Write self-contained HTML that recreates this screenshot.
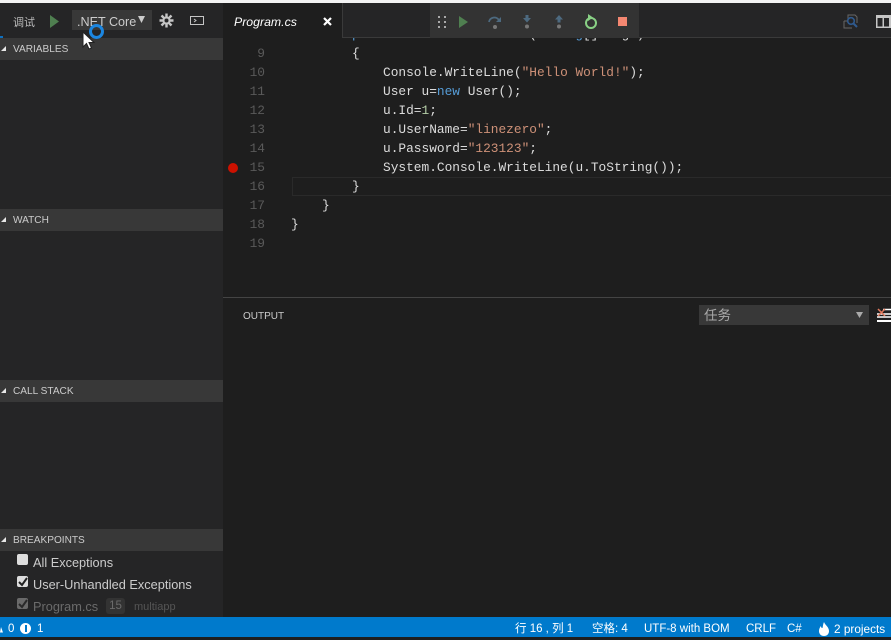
<!DOCTYPE html>
<html><head><meta charset="utf-8"><style>
html,body{margin:0;padding:0}
body{width:891px;height:637px;overflow:hidden;position:relative;background:#1e1e1e;font-family:"Liberation Sans","Noto Sans CJK SC",sans-serif;}
.a{position:absolute;white-space:pre}
.sec{position:absolute;left:0;width:223px;height:22px;background:#383838;color:#ccc;font-size:10.1px;line-height:23px;}
.sec span{position:absolute;left:13px}
.sec i{position:absolute;left:1px;top:8px;width:0;height:0;border-style:solid;border-width:0 0 5px 5px;border-color:transparent transparent #e8e8e8 transparent}
.ln{position:absolute;left:223px;width:42px;text-align:right;color:#5a5a5a;font:12.83px/19px "Liberation Mono",monospace}
.c{position:absolute;color:#dcdcdc;font:12.83px/19px "Liberation Mono",monospace;white-space:pre}
.s{color:#ce9178}.k{color:#569cd6}.n{color:#b5cea8}.b{color:#9cdcfe}
.st{position:absolute;top:618px;height:20px;line-height:22px;color:#fff;font-size:11.5px;white-space:pre}
.cb{position:absolute;left:17px;width:11px;height:11px;background:#ddd;border-radius:2px}
</style></head><body>
<div class="a" style="left:0;top:0;width:891px;height:3px;background:#f3f3f3"></div>
<div class="a" style="left:0;top:3px;width:223px;height:614px;background:#252526"></div>
<div class="a" style="left:223px;top:3px;width:668px;height:34px;background:#252526"></div>
<div class="a" style="left:223px;top:37px;width:668px;height:1px;background:#3a3a3a"></div>
<div class="a" style="left:223px;top:3px;width:119px;height:35px;background:#1e1e1e"></div>
<div class="a" style="left:342px;top:3px;width:1px;height:34px;background:#3a3a3a"></div>
<div class="a" style="left:0;top:36px;width:3px;height:2px;background:#0e70c0"></div>

<div class="a" style="left:13px;top:15px;font-size:11px;line-height:16px;color:#bbb">调试</div>
<svg class="a" style="left:50px;top:15px" width="9" height="13"><path d="M0 0L9 6.500L0 13Z" fill="#4f7f50"/></svg>
<div class="a" style="left:72px;top:10px;width:80px;height:20px;background:#383838"></div>
<div class="a" style="left:77px;top:14px;font-size:12.6px;line-height:16px;color:#ccc">.NET Core</div>
<svg class="a" style="left:138px;top:16px" width="8" height="7"><path d="M0 0H7L3.500 7Z" fill="#ccc"/></svg>
<svg class="a" style="left:159px;top:13px" width="15" height="15" viewBox="0 0 15 15"><g stroke="#c5c5c5" stroke-width="2.400"><path d="M7.500 0.500V14.500M0.500 7.500H14.500M2.500 2.500L12.500 12.500M12.500 2.500L2.500 12.500"/></g><circle cx="7.500" cy="7.500" r="4" fill="#c5c5c5"/><circle cx="7.500" cy="7.500" r="2" fill="#252526"/></svg>
<svg class="a" style="left:190px;top:16px" width="15" height="10"><rect x=".5" y=".5" width="13" height="8" fill="none" stroke="#c5c5c5"/><path d="M4 3L6 4.500L4 6" stroke="#c5c5c5" fill="none"/></svg>

<div class="sec" style="top:38px"><i></i><span>VARIABLES</span></div>
<div class="sec" style="top:209px"><i></i><span>WATCH</span></div>
<div class="sec" style="top:380px"><i></i><span>CALL STACK</span></div>
<div class="sec" style="top:529px"><i></i><span>BREAKPOINTS</span></div>

<div class="a" style="left:89px;top:24px;width:9px;height:9px;border:3.500px solid #1c86e0;border-radius:50%"></div>
<svg class="a" style="left:82px;top:31px" width="13" height="20"><path d="M1 1V16L4.500 12.500L7 18L9.500 17L7 11.500H12Z" fill="#fff" stroke="#222"/></svg>

<div class="cb" style="top:554px"></div>
<div class="a" style="left:33px;top:555px;font-size:12.75px;line-height:16px;color:#ccc">All Exceptions</div>
<div class="cb" style="top:576px"></div>
<svg class="a" style="left:18px;top:577px" width="10" height="10"><path d="M1 5L4 8L9 1" stroke="#222" stroke-width="2" fill="none"/></svg>
<div class="a" style="left:33px;top:577px;font-size:12.75px;line-height:16px;color:#ccc">User-Unhandled Exceptions</div>
<div class="cb" style="top:598px;background:#6a6a6a"></div>
<svg class="a" style="left:18px;top:599px" width="10" height="10"><path d="M1 5L4 8L9 1" stroke="#2a2a2a" stroke-width="2" fill="none"/></svg>
<div class="a" style="left:33px;top:599px;font-size:12.75px;line-height:16px;color:#6b6b6b">Program.cs</div>
<div class="a" style="left:106px;top:598px;width:19px;height:16px;border-radius:3px;background:#333;color:#6b6b6b;font-size:11.5px;line-height:17px;text-align:center">15</div>
<div class="a" style="left:134px;top:600px;font-size:11px;line-height:15px;color:#555">multiapp</div>

<div class="a" style="left:234px;top:14px;font-size:12.3px;line-height:16px;font-style:italic;color:#fff">Program.cs</div>
<svg class="a" style="left:323px;top:17px" width="9" height="9"><path d="M1 1L8 8M8 1L1 8" stroke="#fff" stroke-width="2.200"/></svg>

<div class="a" style="left:292px;top:177px;width:599px;height:17px;border:1px solid #2a2a2a;border-right:0"></div>

<div class="c" style="left:352px;top:25px;clip-path:inset(13px 0 0 0)"><span class="k">public static</span> <span class="k">void</span> Main(<span class="k">string</span>[] args)</div>
<div class="ln" style="top:44px">9</div><div class="c" style="left:352px;top:44px">{</div>
<div class="ln" style="top:63px">10</div><div class="c" style="left:383px;top:63px">Console.WriteLine(<span class="s">"Hello World!"</span>);</div>
<div class="ln" style="top:82px">11</div><div class="c" style="left:383px;top:82px">User u=<span class="k">new</span> User();</div>
<div class="ln" style="top:101px">12</div><div class="c" style="left:383px;top:101px">u.Id=<span class="n">1</span>;</div>
<div class="ln" style="top:120px">13</div><div class="c" style="left:383px;top:120px">u.UserName=<span class="s">"linezero"</span>;</div>
<div class="ln" style="top:139px">14</div><div class="c" style="left:383px;top:139px">u.Password=<span class="s">"123123"</span>;</div>
<div class="ln" style="top:158px">15</div><div class="c" style="left:383px;top:158px">System.Console.WriteLine(u.ToString());</div>
<div class="ln" style="top:177px">16</div><div class="c" style="left:352px;top:177px">}</div>
<div class="ln" style="top:196px">17</div><div class="c" style="left:322px;top:196px">}</div>
<div class="ln" style="top:215px">18</div><div class="c" style="left:291px;top:215px">}</div>
<div class="ln" style="top:234px">19</div>
<div class="a" style="left:228px;top:163px;width:10px;height:10px;border-radius:50%;background:#c10"></div>

<div class="a" style="left:430px;top:3px;width:209px;height:35px;background:#333"></div>
<svg class="a" style="left:438px;top:16px" width="9" height="12" fill="#aaa"><rect width="2" height="2"/><rect x="6" width="2" height="2"/><rect y="5" width="2" height="2"/><rect x="6" y="5" width="2" height="2"/><rect y="10" width="2" height="2"/><rect x="6" y="10" width="2" height="2"/></svg>
<svg class="a" style="left:459px;top:16px" width="9" height="12"><path d="M0 0L9 6L0 12Z" fill="#4f7f50"/></svg>
<svg class="a" style="left:488px;top:15px" width="14" height="14" fill="none"><path d="M1 7C2 2 8 1 11 5" stroke="#4d6a80" stroke-width="1.700"/><path d="M13 2V7H8Z" fill="#4d6a80"/><circle cx="7" cy="12" r="2" fill="#777"/></svg>
<svg class="a" style="left:522px;top:15px" width="10" height="14"><path d="M3.500 0H6.500V3H9L5 7.500L1 3H3.500Z" fill="#4d6a80"/><circle cx="5" cy="11.500" r="2" fill="#777"/></svg>
<svg class="a" style="left:554px;top:15px" width="10" height="14"><path d="M5 0L9 4.500H6.500V7.500H3.500V4.500H1Z" fill="#4d6a80"/><circle cx="5" cy="11.500" r="2" fill="#777"/></svg>
<svg class="a" style="left:584px;top:14px" width="14" height="16" fill="none"><circle cx="7" cy="9" r="5" stroke="#89d185" stroke-width="2"/><path d="M4 0L9 3.500L4 7Z" fill="#89d185"/><circle cx="7" cy="9" r="1.800" fill="#333"/></svg>
<div class="a" style="left:618px;top:17px;width:9px;height:9px;background:#f48771"></div>

<svg class="a" style="left:843px;top:13px" width="17" height="16" fill="none"><path d="M1 8H5V2H12L14 4V10" stroke="#666"/><path d="M1 8V15H9" stroke="#666"/><circle cx="8" cy="8" r="3.300" stroke="#2f5a8e" stroke-width="1.600"/><path d="M10.500 10.500L14 14" stroke="#2f5a8e" stroke-width="2"/></svg>
<svg class="a" style="left:876px;top:15px" width="15" height="13"><rect x="0" y="0" width="15" height="13" fill="#c5c5c5"/><rect x="1.500" y="3" width="5" height="8.500" fill="#252526"/><rect x="8" y="3" width="5" height="8.500" fill="#252526"/></svg>

<div class="a" style="left:223px;top:297px;width:668px;height:1px;background:#444"></div>
<div class="a" style="left:243px;top:309px;font-size:10px;line-height:16px;color:#ccc">OUTPUT</div>
<div class="a" style="left:699px;top:305px;width:170px;height:20px;background:#383838"></div>
<div class="a" style="left:704px;top:307px;font-size:13.5px;line-height:18px;color:#aaa">任务</div>
<svg class="a" style="left:856px;top:312px" width="7" height="6"><path d="M0 0H7L3.500 6Z" fill="#aaa"/></svg>
<svg class="a" style="left:877px;top:308px" width="14" height="16"><path d="M6 1.500H14M0 6H14M0 9H14" stroke="#fff" stroke-width="1.500"/><path d="M0 13H14" stroke="#fff" stroke-width="2"/><path d="M1 1L8 8M8 1L1 8" stroke="#e27a5e" stroke-width="1.500"/></svg>

<div class="a" style="left:0;top:617px;width:891px;height:20px;background:#007acc"></div>
<svg class="a" style="left:0;top:626px" width="4" height="7"><path d="M0 6.500L3 6.500L1 1Z" fill="#fff"/></svg>
<div class="st" style="left:8px">0</div>
<div class="a" style="left:20px;top:623px;width:11px;height:11px;border-radius:50%;background:#fff"></div>
<div class="a" style="left:25px;top:625px;width:2px;height:7px;background:#007acc"></div>
<div class="st" style="left:37px">1</div>
<div class="st" style="left:515px">行 16 , 列 1</div>
<div class="st" style="left:592px">空格: 4</div>
<div class="st" style="left:644px">UTF-8 with BOM</div>
<div class="st" style="left:746px">CRLF</div>
<div class="st" style="left:787px">C#</div>
<svg class="a" style="left:818px;top:622px" width="12" height="14"><path d="M6 0C7 3 11 5 11 9C11 12 9 14 6 14C3 14 1 12 1 9C1 7 2 5 3 4C3 6 4 6 4.500 6C5 4 5 2 6 0Z" fill="#fff"/></svg>
<div class="st" style="left:834px;font-size:11.8px">2 projects</div>
</body></html>
